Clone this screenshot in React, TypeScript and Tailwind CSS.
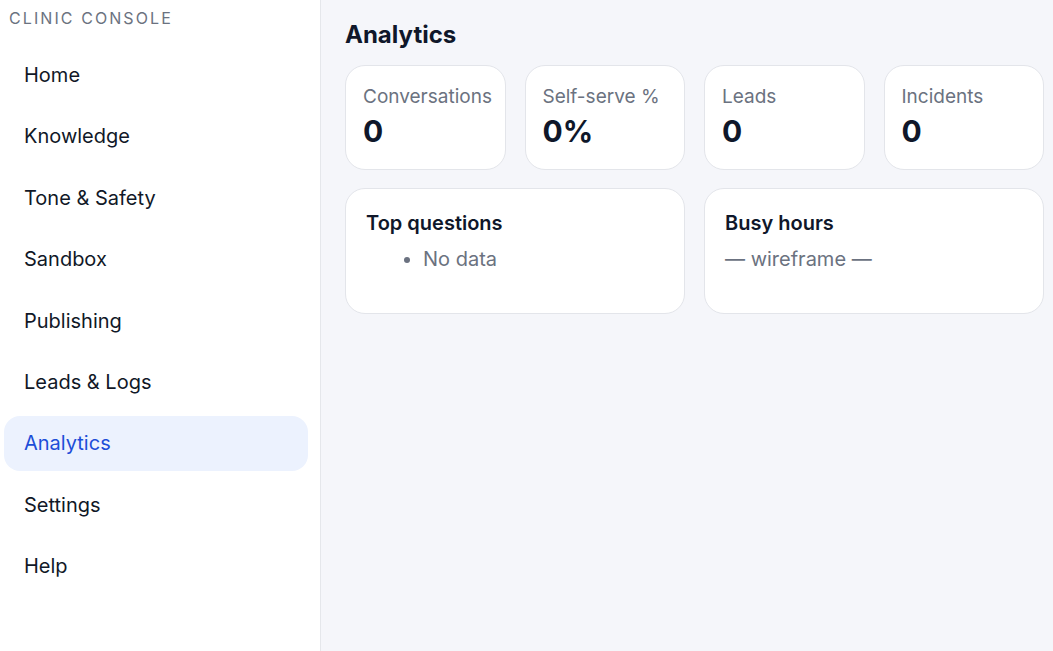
import { useState } from 'react';

const NAV = ['Home', 'Knowledge', 'Tone & Safety', 'Sandbox', 'Publishing', 'Leads & Logs', 'Analytics', 'Settings', 'Help'];

const STATS = [
  { label: 'Conversations', value: '0' },
  { label: 'Self-serve %', value: '0%' },
  { label: 'Leads', value: '0' },
  { label: 'Incidents', value: '0' },
];

function Sidebar({ active, onPick }: { active: string; onPick: (s: string) => void }) {
  return (
    <aside className="flex w-[321px] shrink-0 flex-col border-r border-[#e5e7eb] bg-white pr-3 pl-1">
      <div className="pt-[8px] pl-[5px] text-[16px] leading-[20px] tracking-[0.13em] text-[#6b7280] uppercase">
        Clinic Console
      </div>
      <nav className="mt-[19.5px] flex flex-col gap-[6.4px]">
        {NAV.map((item) => {
          const on = item === active;
          return (
            <button
              key={item}
              type="button"
              onClick={() => onPick(item)}
              className={`flex h-[55px] items-center rounded-[16px] pl-5 text-left text-[20px] ${
                on ? 'bg-[#ecf2fe] text-[#1d4ed8]' : 'text-[#111827]'
              }`}
            >
              {item}
            </button>
          );
        })}
      </nav>
    </aside>
  );
}

export default function App() {
  const [active, setActive] = useState('Analytics');
  return (
    <div className="flex h-[651px] w-[1053px] overflow-hidden bg-[#f5f6fa] font-['Inter','Noto_Sans',sans-serif]">
      <Sidebar active={active} onPick={setActive} />
      <main className="flex-1 pt-[19px] pl-6">
        <h1 className="text-[24px] leading-[32px] font-bold text-[#0f172a]">Analytics</h1>
        <div className="mt-[14px] grid w-[699px] grid-cols-4 gap-x-[19px] gap-y-[18px]">
          {STATS.map((s) => (
            <div key={s.label} className="h-[105px] rounded-[20px] border border-[#e3e5ea] bg-white px-[17px] pt-[19px]">
              <div className="text-[19px] leading-[24px] text-[#6b7280]">{s.label}</div>
              <div className="mt-[4px] text-[30px] leading-[36px] font-bold text-[#0f172a]">{s.value}</div>
            </div>
          ))}
          <div className="col-span-2 h-[126px] rounded-[20px] border border-[#e3e5ea] bg-white px-[20px] pt-[21px]">
            <div className="text-[20px] leading-[26px] font-semibold text-[#0f172a]">Top questions</div>
            <ul className="mt-[10px] list-disc pl-[57px] text-[20px] leading-[26px] text-[#6b7280] marker:text-[#6b7280]">
              <li>No data</li>
            </ul>
          </div>
          <div className="col-span-2 h-[126px] rounded-[20px] border border-[#e3e5ea] bg-white px-[20px] pt-[21px]">
            <div className="text-[20px] leading-[26px] font-semibold text-[#0f172a]">Busy hours</div>
            <div className="mt-[10px] text-[20px] leading-[26px] text-[#6b7280]">— wireframe —</div>
          </div>
        </div>
      </main>
    </div>
  );
}
